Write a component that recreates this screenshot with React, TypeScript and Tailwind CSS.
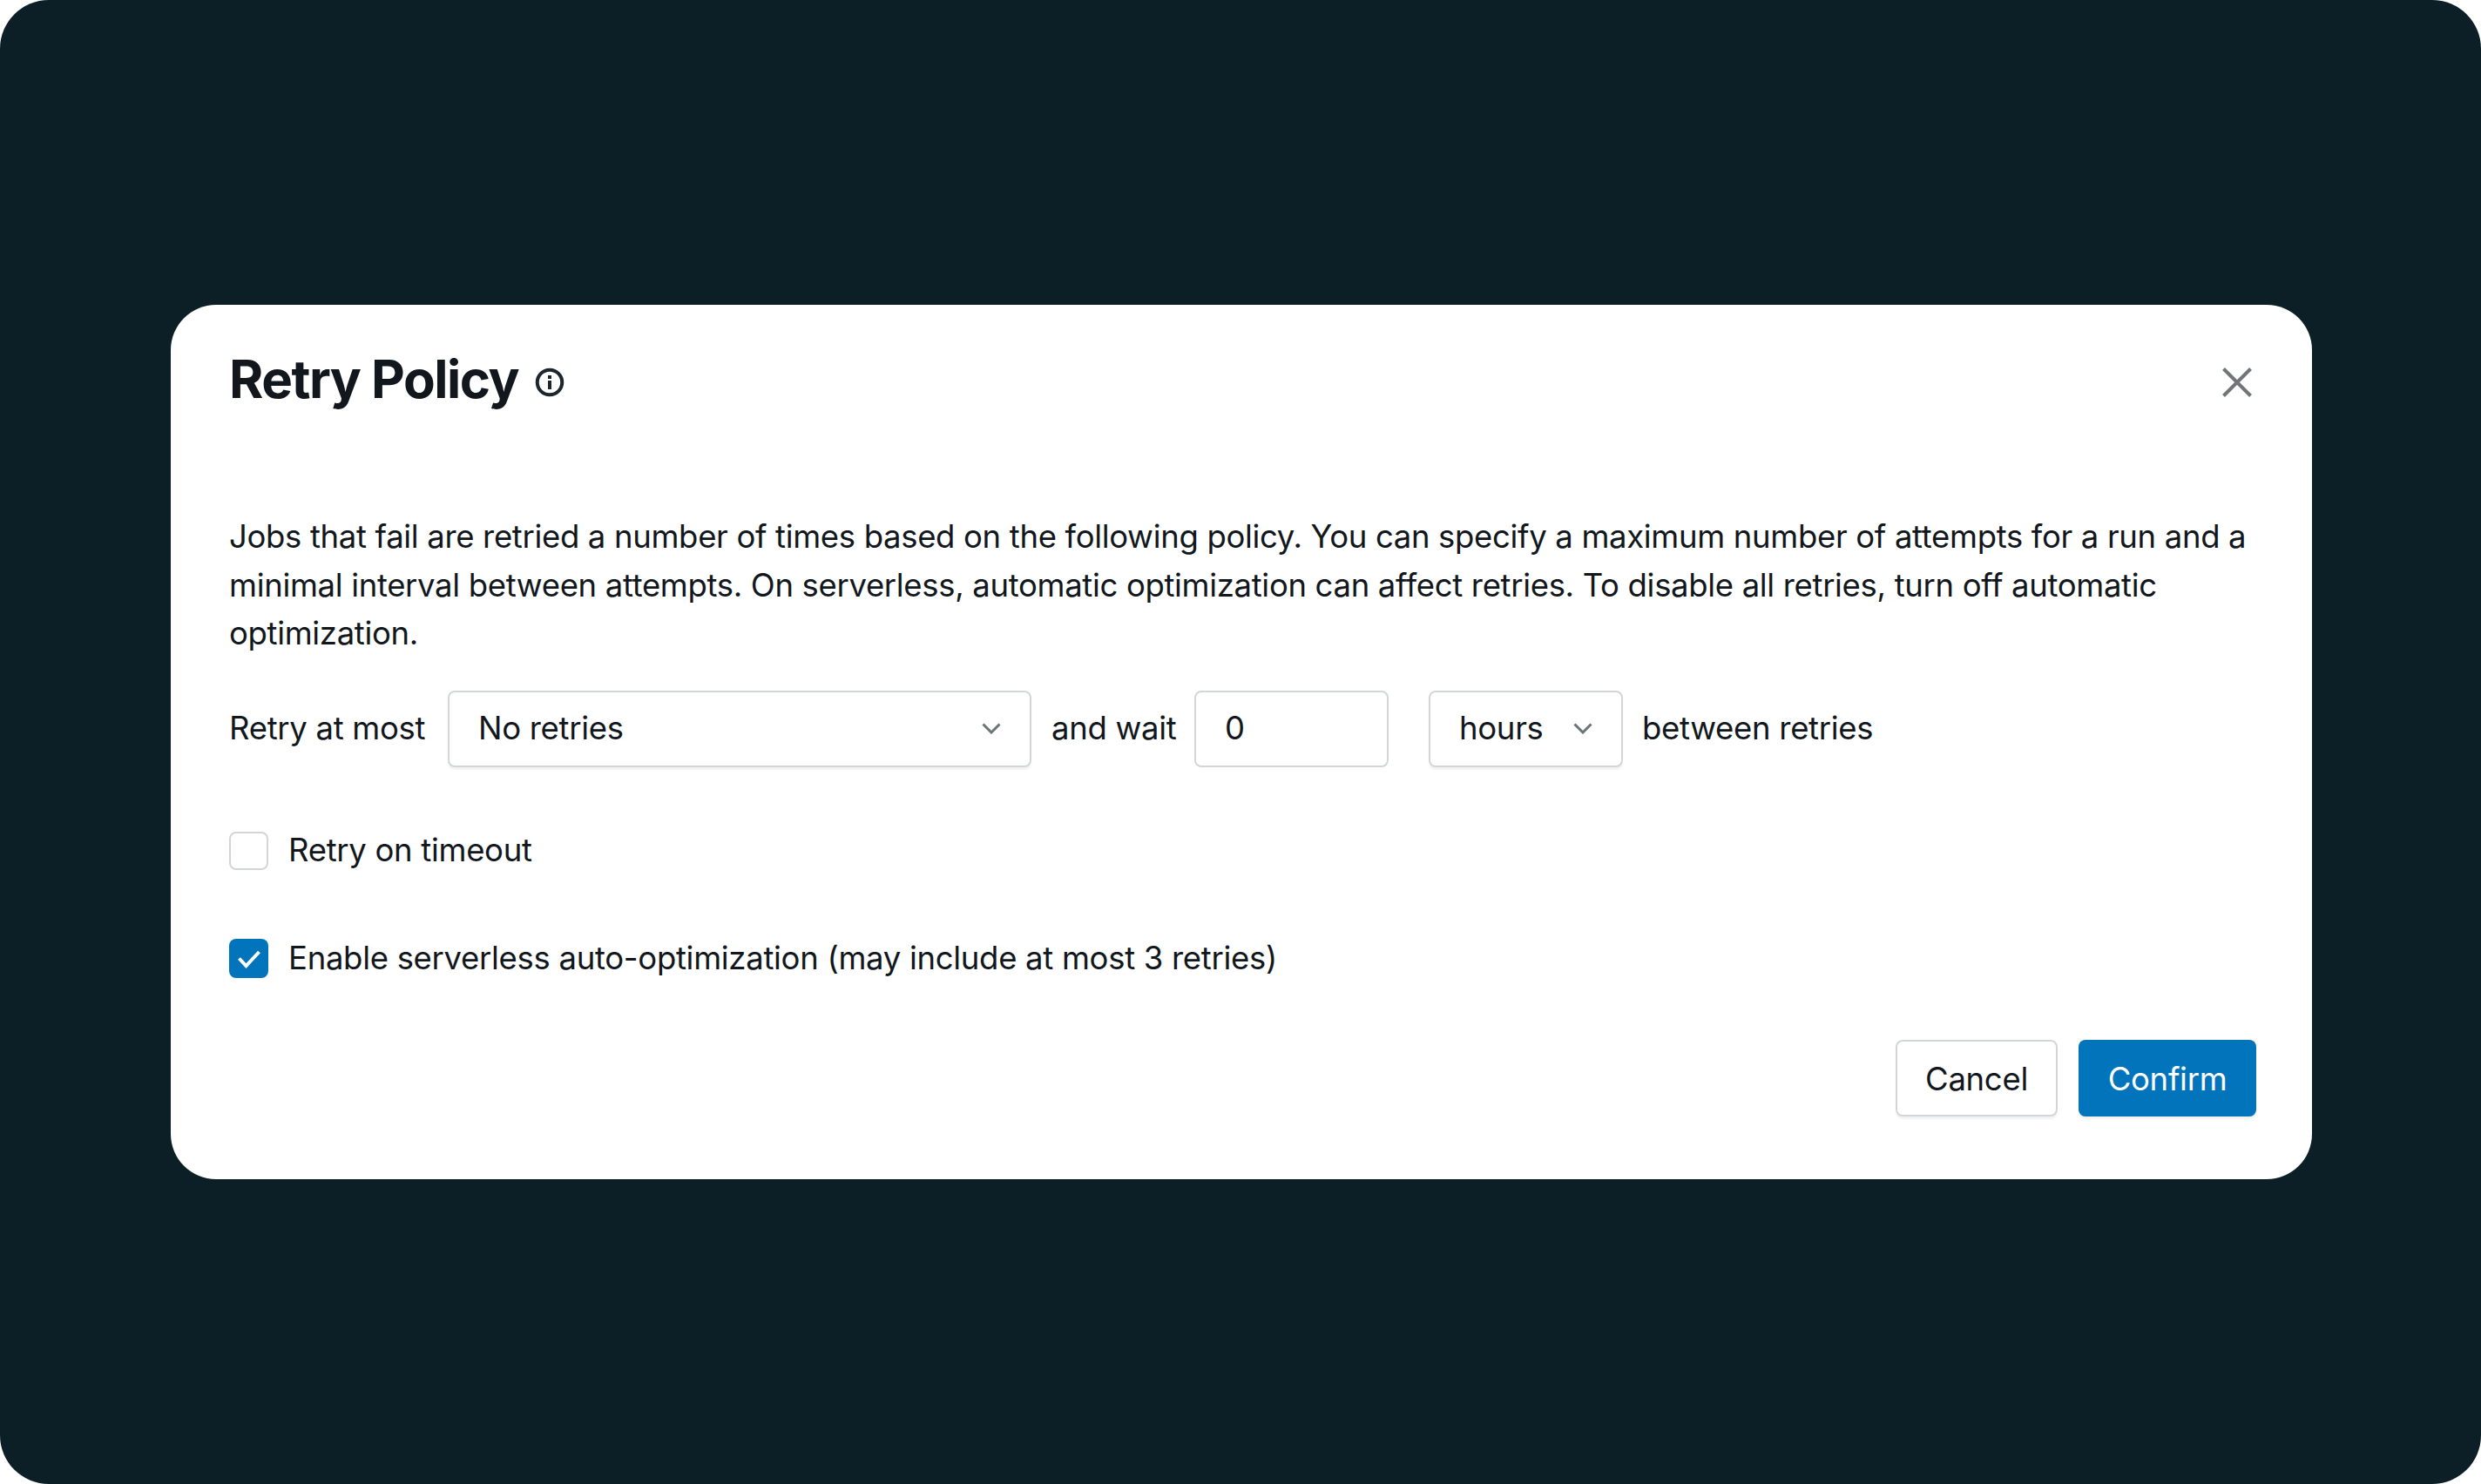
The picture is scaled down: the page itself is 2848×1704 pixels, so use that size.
function Chevron() {
  return (
    <svg width="22" height="13" viewBox="0 0 22 13" fill="none" className="shrink-0">
      <path d="M1.5 1.5 11 11l9.5-9.5" stroke="#6b7479" strokeWidth="3" />
    </svg>
  );
}

function Select({ label, className }: { label: string; className: string }) {
  return (
    <div className={`flex h-[88px] items-center justify-between rounded-[8px] border-2 border-[#d3d6d8] bg-white pl-[33px] shadow-[0_3px_2px_rgba(0,0,0,0.05)] ${className}`}>
      <span>{label}</span>
      <Chevron />
    </div>
  );
}

export default function App() {
  return (
    <div className="h-[1704px] w-[2848px] overflow-hidden bg-white">
      <div className="flex h-full w-full items-center justify-center rounded-[56px] bg-[#0c1f26] pl-[2px] font-['Inter',sans-serif] text-[36.5px] tracking-[-0.3px] text-[#11171c]">
        <div className="flex h-[1004px] w-[2458px] flex-col rounded-[52px] bg-white pt-[36px] pr-[64px] pb-[72px] pl-[67px]">
          <div className="flex h-[100px] items-center justify-between">
            <div className="flex items-center gap-[19px]">
              <h1 className="-mt-[2px] text-[60px] leading-[100px] font-[650] tracking-[-0.025em]">Retry Policy</h1>
              <svg width="34" height="34" viewBox="0 0 34 34" fill="none" className="mt-[6px]">
                <circle cx="17" cy="17" r="14.25" stroke="#1d262c" strokeWidth="4" />
                <rect x="15" y="15" width="4" height="10" fill="#1d262c" />
                <rect x="15" y="9" width="4" height="4" fill="#1d262c" />
              </svg>
            </div>
            <svg width="34" height="34" viewBox="0 0 34 34" fill="none" className="mt-[6px] mr-[5px]">
              <path d="M1.5 1.5l31 31M32.5 1.5l-31 31" stroke="#6f7578" strokeWidth="4" />
            </svg>
          </div>

          <p className="mt-[103px] w-[2330px] leading-[55.6px] tracking-[-0.33px]">
            Jobs that fail are retried a number of times based on the following policy. You can specify a maximum number of attempts for a run and a minimal interval between attempts. On serverless, automatic optimization can affect retries. To disable all retries, turn off automatic optimization.
          </p>

          <div className="mt-[37px] flex h-[88px] items-center">
            <span className="w-[251px] shrink-0">Retry at most</span>
            <Select label="No retries" className="w-[670px] pr-[33px]" />
            <span className="ml-[23px] w-[164px] shrink-0">and wait</span>
            <div className="flex h-[88px] w-[223px] items-center rounded-[8px] border-2 border-[#d3d6d8] bg-white pl-[33px]">0</div>
            <Select label="hours" className="ml-[46px] w-[223px] pr-[33px]" />
            <span className="ml-[22px]">between retries</span>
          </div>

          <label className="mt-[74px] flex h-[44px] items-center gap-[23px]">
            <span className="h-[44px] w-[45px] rounded-[8px] border-2 border-[#d3d6d8] bg-white" />
            <span>Retry on timeout</span>
          </label>

          <label className="mt-[80px] flex h-[44px] items-center gap-[23px]">
            <span className="flex h-[45px] w-[45px] items-center justify-center rounded-[8px] bg-[#0274bc]">
              <svg width="28" height="22" viewBox="0 0 28 22" fill="none">
                <path d="M2.5 10.5 10.5 19 25.5 3" stroke="white" strokeWidth="4" />
              </svg>
            </span>
            <span>Enable serverless auto-optimization (may include at most 3 retries)</span>
          </label>

          <div className="mt-auto flex justify-end gap-[24px]">
            <button className="flex h-[88px] w-[186px] items-center justify-center rounded-[8px] border-2 border-[#d3d6d8] bg-white pt-[2px] shadow-[0_3px_2px_rgba(0,0,0,0.05)]">Cancel</button>
            <button className="flex h-[88px] w-[204px] items-center justify-center rounded-[8px] bg-[#0274bc] pt-[2px] text-white shadow-[0_3px_2px_rgba(0,0,0,0.05)]">Confirm</button>
          </div>
        </div>
      </div>
    </div>
  );
}
